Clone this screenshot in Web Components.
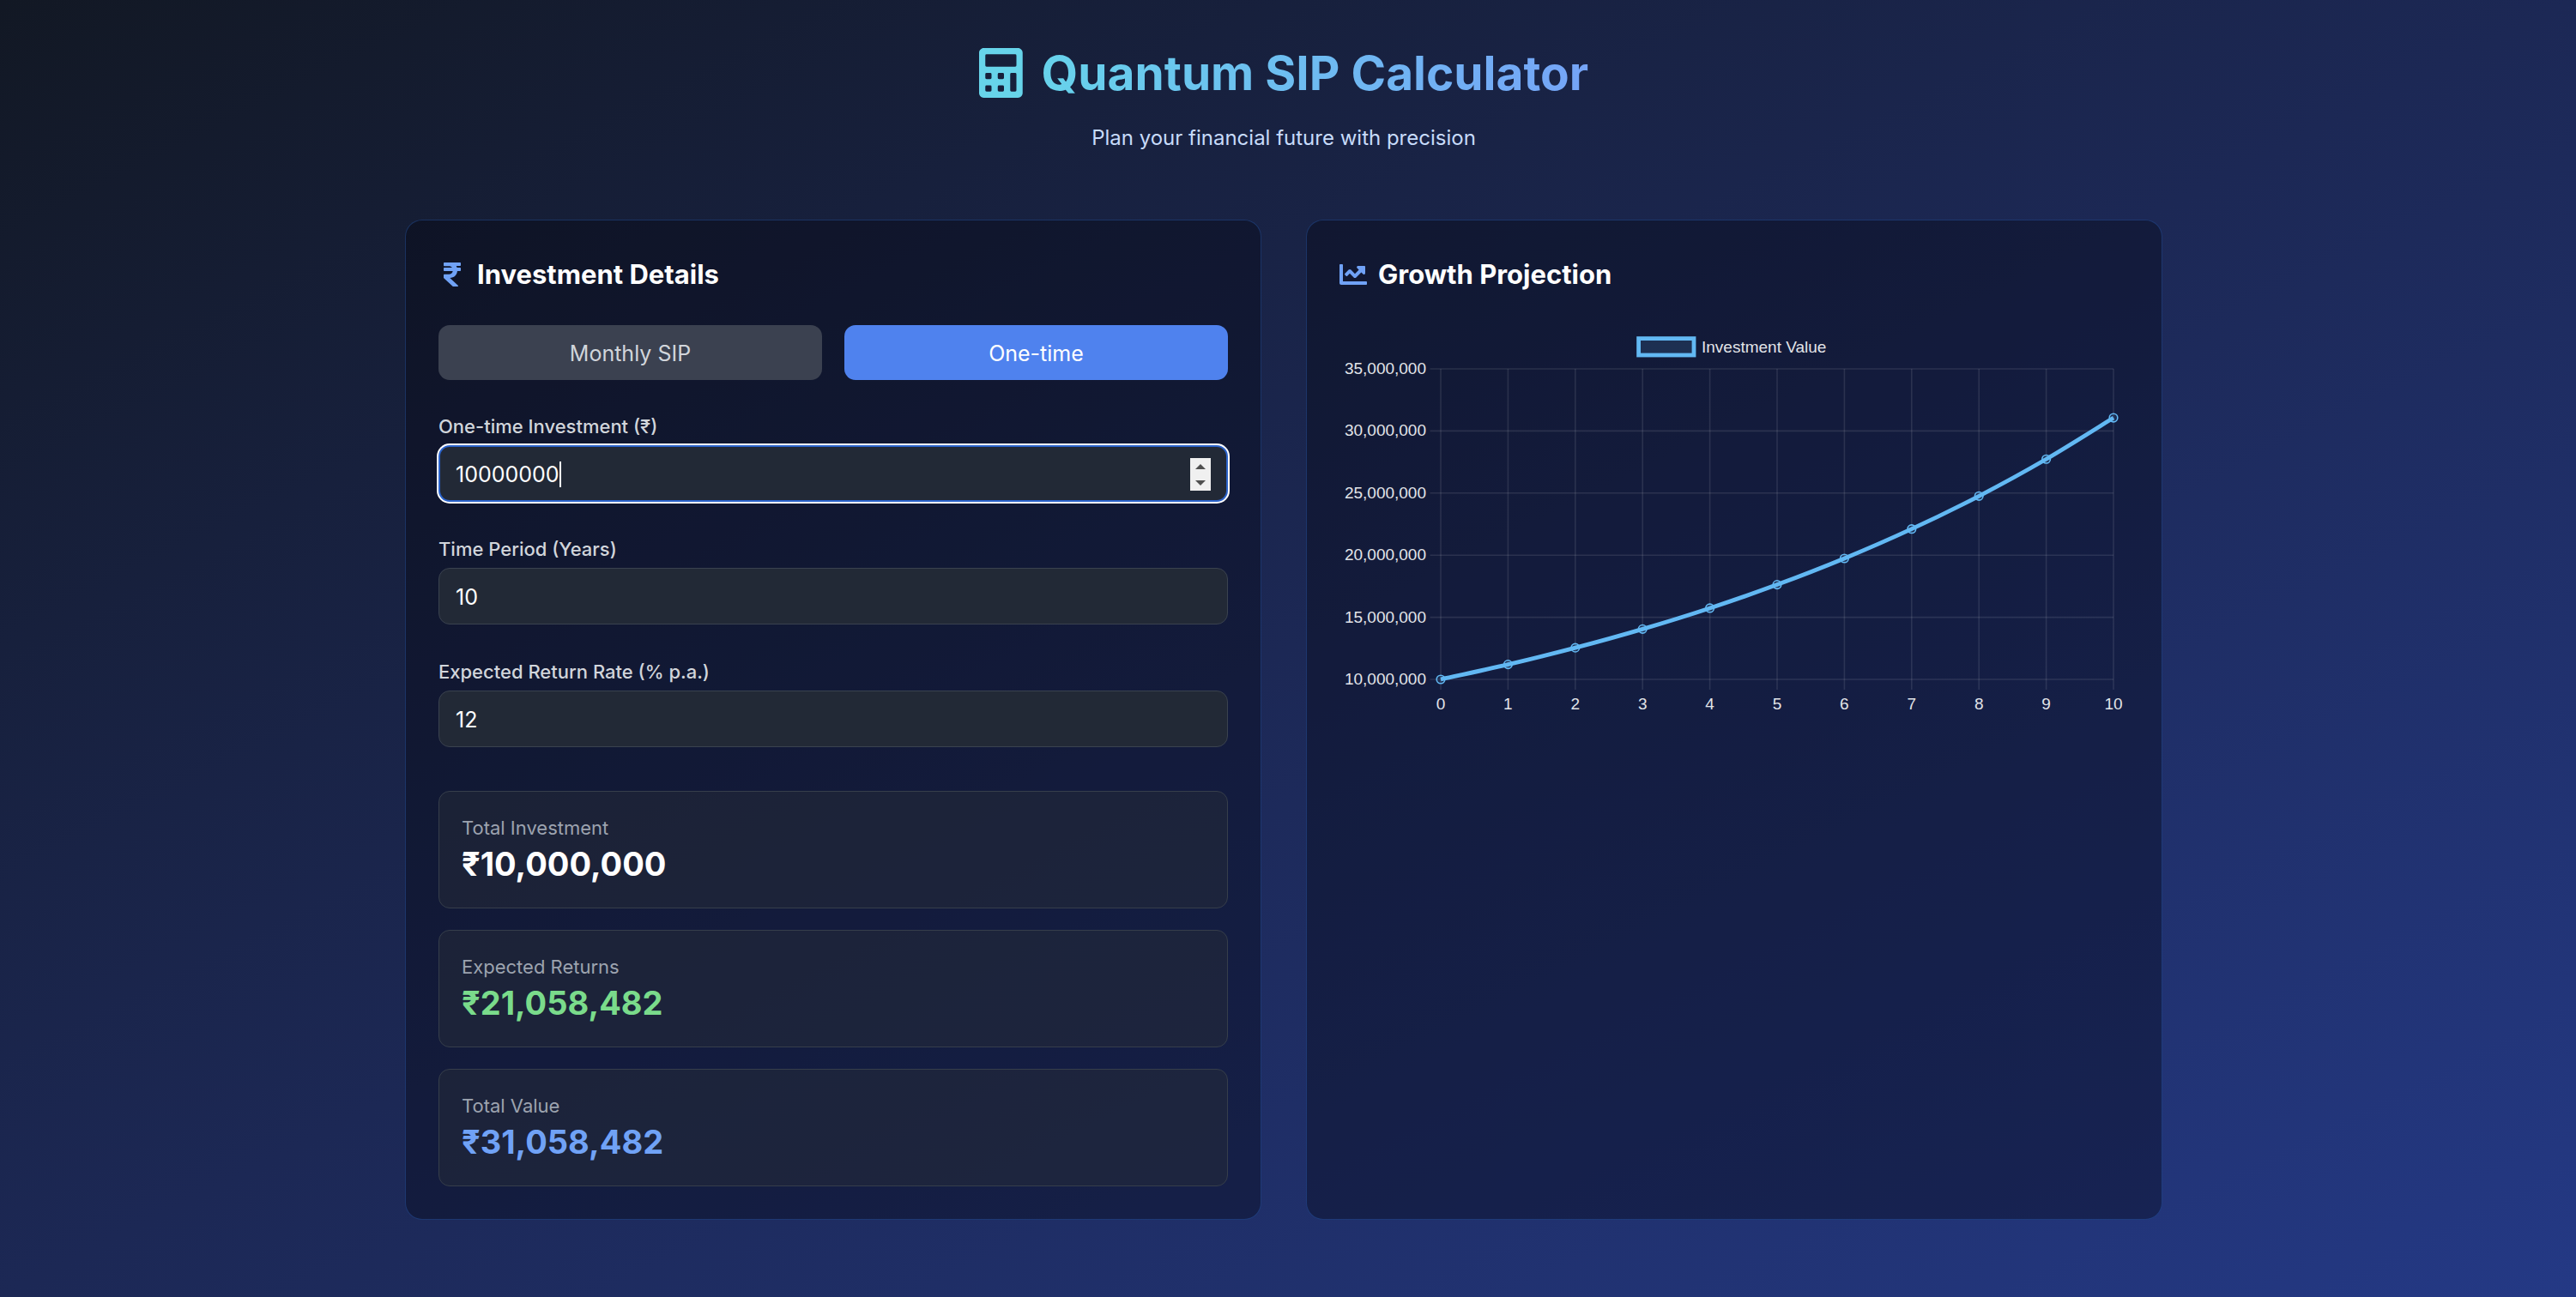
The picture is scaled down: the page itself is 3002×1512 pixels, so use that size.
<!DOCTYPE html>
<html lang="en">
<head>
<meta charset="utf-8">
<title>Quantum SIP Calculator</title>
<style>
  html { background: #1c2855; }
  body {
    margin: 0;
    min-height: 100vh;
    background: linear-gradient(to bottom right, #121824, #1c2855, #243985);
    color: #fff;
    font-family: Inter, "Liberation Sans", sans-serif;
  }
</style>
</head>
<body>
<sip-app></sip-app>

<script>
const ICONS = {
  calculator: ['0 0 448 512', 'M400 0H48C22.4 0 0 22.4 0 48v416c0 25.6 22.4 48 48 48h352c25.6 0 48-22.4 48-48V48c0-25.6-22.4-48-48-48zM77 64h294q13 0 13 13v102q0 13-13 13H77q-13 0-13-13V77q0-13 13-13zM77 256h38q13 0 13 13v38q0 13-13 13H77q-13 0-13-13v-38q0-13 13-13zM205 256h38q13 0 13 13v38q0 13-13 13h-38q-13 0-13-13v-38q0-13 13-13zM77 384h38q13 0 13 13v38q0 13-13 13H77q-13 0-13-13v-38q0-13 13-13zM205 384h38q13 0 13 13v38q0 13-13 13h-38q-13 0-13-13v-38q0-13 13-13zM333 256h38q13 0 13 13v166q0 13-13 13h-38q-13 0-13-13V269q0-13 13-13z'],
  rupee: ['-96 0 512 512', 'M308 96c6.627 0 12-5.373 12-12V44c0-6.627-5.373-12-12-12H12C5.373 32 0 37.373 0 44v44.748c0 6.627 5.373 12 12 12h85.28c27.308 0 48.261 9.958 60.97 27.252H12c-6.627 0-12 5.373-12 12v40c0 6.627 5.373 12 12 12h158.757c-6.217 36.086-32.961 58.632-74.757 58.632H12c-6.627 0-12 5.373-12 12v53.012c0 3.349 1.4 6.546 3.861 8.818l165.052 152.356a12.001 12.001 0 0 0 8.139 3.182h82.562c10.924 0 16.166-13.408 8.139-20.818L116.871 319.906c76.499-2.34 131.144-53.395 138.318-127.906H308c6.627 0 12-5.373 12-12v-40c0-6.627-5.373-12-12-12h-58.69c-3.486-11.541-8.28-22.246-14.252-32H308z'],
  chart: ['0 0 512 512', 'M496 384H64V80c0-8.84-7.16-16-16-16H16C7.16 64 0 71.16 0 80v336c0 17.67 14.33 32 32 32h464c8.84 0 16-7.16 16-16v-32c0-8.84-7.16-16-16-16zM464 96H345.94c-21.38 0-32.09 25.85-16.97 40.97l32.4 32.4L288 242.75l-73.37-73.37c-12.5-12.5-32.76-12.5-45.25 0l-68.69 68.69c-6.25 6.25-6.25 16.38 0 22.63l22.62 22.62c6.25 6.25 16.38 6.25 22.63 0L192 237.25l73.37 73.37c12.5 12.5 32.76 12.5 45.25 0l96-96 32.4 32.4c15.12 15.12 40.97 4.41 40.97-16.97V112c.01-8.84-7.15-16-15.99-16z']
};

class BaseElement extends HTMLElement {
  connectedCallback() {
    if (this.shadowRoot) return;
    this.attachShadow({ mode: 'open' }).innerHTML =
      `<style>*{box-sizing:border-box}${this.styles()}</style>${this.markup()}`;
  }
}

customElements.define('sip-icon', class extends BaseElement {
  styles() { return ':host{display:block;flex:none}svg{display:block;height:100%;width:auto}'; }
  markup() {
    const [box, d] = ICONS[this.getAttribute('name')];
    return `<svg viewBox="${box}" fill="currentColor" fill-rule="evenodd" aria-hidden="true"><path d="${d}"/></svg>`;
  }
});

customElements.define('sip-header', class extends BaseElement {
  styles() { return `
    :host{display:flex;flex-direction:column;align-items:center;gap:25px}
    .title{display:flex;align-items:center;gap:22px}
    sip-icon{height:58px;color:#67d4ea}
    h1{margin:0;font-size:55px;line-height:64px;font-weight:700;color:transparent;
      background:linear-gradient(to right,#67d2eb,#75a4f7);-webkit-background-clip:text;background-clip:text}
    p{margin:0;font-size:24px;line-height:38px;color:#c7dbfa}`; }
  markup() { return `
    <div class="title"><sip-icon name="calculator"></sip-icon><h1>Quantum SIP Calculator</h1></div>
    <p>Plan your financial future with precision</p>`; }
});

customElements.define('sip-panel', class extends BaseElement {
  styles() { return `
    :host{display:block;padding:38px;border:1px solid rgba(59,130,246,.28);border-radius:20px;background:rgba(4,4,12,.35)}
    .head{display:flex;align-items:center;gap:13px;padding-top:2px;margin-bottom:36px}
    sip-icon{height:32px;color:#70a2f6}
    h2{margin:0;font-size:31px;line-height:46px;font-weight:700}`; }
  markup() { return `
    <div class="head"><sip-icon name="${this.getAttribute('icon')}"></sip-icon><h2>${this.getAttribute('heading')}</h2></div>
    <slot></slot>`; }
});

customElements.define('sip-tabs', class extends BaseElement {
  styles() { return `
    :host{display:grid;grid-template-columns:1fr 1fr;gap:26px}
    button{height:64px;padding:2px 0 0;border:0;border-radius:13px;background:#3b4150;color:#d1d5db;font:400 25px/38px Inter,"Liberation Sans",sans-serif}
    button[aria-pressed=true]{background:#4f82ee;color:#fff}`; }
  markup() { return `<button type="button" aria-pressed="false">Monthly SIP</button><button type="button" aria-pressed="true">One-time</button>`; }
});

customElements.define('sip-field', class extends BaseElement {
  styles() { return `
    :host{display:flex;flex-direction:column;gap:6px}
    label{font-size:22px;line-height:32px;font-weight:500;color:#d1d5db}
    .box{display:flex;align-items:center;height:66px;padding:2px 19px 0;border:1px solid #3a424f;border-radius:13px;background:#222936}
    input{width:100%;min-width:0;margin:0;padding:0;border:0;outline:0;background:none;color:#fff;caret-color:transparent;
      font:400 25px/38px Inter,"Liberation Sans",sans-serif;appearance:textfield;-moz-appearance:textfield}
    input::-webkit-inner-spin-button{-webkit-appearance:none;margin:0}
    :host([active]) .box{padding:2px 18px 0;border:2px solid #2b63cb;box-shadow:0 0 0 2px #fff}
    :host([active]) input{width:auto;field-sizing:content}
    .caret{width:2px;height:30px;background:#fff}
    .spin{display:flex;flex-direction:column;width:24px;height:38px;margin-left:auto;background:#f0f0f0}
    .spin button{flex:1;display:grid;place-items:center;padding:0;border:0;background:none}
    .spin svg{display:block;width:12px;height:6px;fill:#505050}`; }
  markup() {
    const active = this.hasAttribute('active');
    return `
    <label for="v">${this.getAttribute('label')}</label>
    <div class="box"><input id="v" type="number" value="${this.getAttribute('value')}">${active ? `
      <span class="caret"></span>
      <span class="spin">
        <button type="button" aria-label="Increase"><svg viewBox="0 0 12 6"><path d="M6 0l6 6H0z"/></svg></button>
        <button type="button" aria-label="Decrease"><svg viewBox="0 0 12 6"><path d="M0 0h12L6 6z"/></svg></button>
      </span>` : ''}</div>`;
  }
});

customElements.define('sip-stat', class extends BaseElement {
  styles() { return `
    :host{display:block;padding:26px 26px 24px;border:1px solid #363e4b;border-radius:13px;background:rgba(38,43,56,.5)}
    .label{font-size:22px;line-height:32px;color:#9ca3af}
    .value{font-size:38px;line-height:53px;font-weight:700}`; }
  markup() { return `<div class="label">${this.getAttribute('label')}</div><div class="value"><slot></slot></div>`; }
});

customElements.define('sip-chart', class extends BaseElement {
  styles() { return `
    :host{display:block}
    svg{display:block;width:100%;height:auto;overflow:visible}
    text{font:19px "Liberation Sans",Arial,sans-serif;fill:#e2e4e8}
    .grid path{fill:none;stroke:rgba(255,255,255,.1);stroke-width:1.6}
    .line{fill:none;stroke:#62b8f3;stroke-width:4.8;stroke-linejoin:round}
    .dot{fill:rgba(98,184,243,.1);stroke:#62b8f3;stroke-width:1.6}
    .key{fill:rgba(98,184,243,.14);stroke:#62b8f3;stroke-width:4.8}`; }
  markup() {
    const left = 118, right = 902, top = 51, bottom = 413;
    const X = i => left + (right - left) * i / 10;
    const Y = v => bottom - (bottom - top) * (v - 10) / 25;
    const pts = Array.from({ length: 11 }, (_, i) => [X(i), Y(10 * 1.12 ** i)]);
    let grid = '', labels = '';
    for (let v = 10; v <= 35; v += 5) {
      grid += `<path d="M105.5 ${Y(v)}H${right}"/>`;
      labels += `<text x="101" y="${Y(v) + 6}" text-anchor="end">${v},000,000</text>`;
    }
    for (let i = 0; i <= 10; i++) {
      grid += `<path d="M${X(i)} ${top}V425"/>`;
      labels += `<text x="${X(i)}" y="448" text-anchor="middle">${i}</text>`;
    }
    const at = i => pts[Math.max(0, Math.min(10, i))];
    let d = `M${pts[0]}`;
    for (let i = 0; i < 10; i++) {
      const [a, b, c, e] = [at(i - 1), at(i), at(i + 1), at(i + 2)];
      d += `C${b[0] + (c[0] - a[0]) / 6} ${b[1] + (c[1] - a[1]) / 6} ${c[0] - (e[0] - b[0]) / 6} ${c[1] - (e[1] - b[1]) / 6} ${c}`;
    }
    return `<svg viewBox="0 0 920 460" role="img" aria-label="Investment value by year">
      <g class="grid">${grid}</g>
      <rect class="key" x="348.6" y="15.6" width="64.4" height="19.4"/>
      <text x="422" y="32">Investment Value</text>
      ${labels}
      <path class="line" d="${d}"/>
      ${pts.map(p => `<circle class="dot" cx="${p[0]}" cy="${p[1]}" r="4.8"/>`).join('')}
    </svg>`;
  }
});

customElements.define('sip-app', class extends BaseElement {
  styles() { return `
    :host{display:block;padding:53px 36px 51px 26px}
    main{display:grid;grid-template-columns:repeat(auto-fit,minmax(min(100%,600px),1fr));gap:52px;max-width:2048px;margin:76px auto 0}
    .fields{display:grid;gap:39px;margin:38px 0 51px}
    .stats{display:grid;gap:25px}
    .gain{color:#7adb8b}
    .total{color:#70a2f6}`; }
  markup() { return `
    <sip-header></sip-header>
    <main>
      <sip-panel icon="rupee" heading="Investment Details">
        <sip-tabs></sip-tabs>
        <div class="fields">
          <sip-field active label="One-time Investment (₹)" value="10000000"></sip-field>
          <sip-field label="Time Period (Years)" value="10"></sip-field>
          <sip-field label="Expected Return Rate (% p.a.)" value="12"></sip-field>
        </div>
        <div class="stats">
          <sip-stat label="Total Investment">₹10,000,000</sip-stat>
          <sip-stat class="gain" label="Expected Returns">₹21,058,482</sip-stat>
          <sip-stat class="total" label="Total Value">₹31,058,482</sip-stat>
        </div>
      </sip-panel>
      <sip-panel icon="chart" heading="Growth Projection"><sip-chart></sip-chart></sip-panel>
    </main>`; }
});
</script>
</body>
</html>
